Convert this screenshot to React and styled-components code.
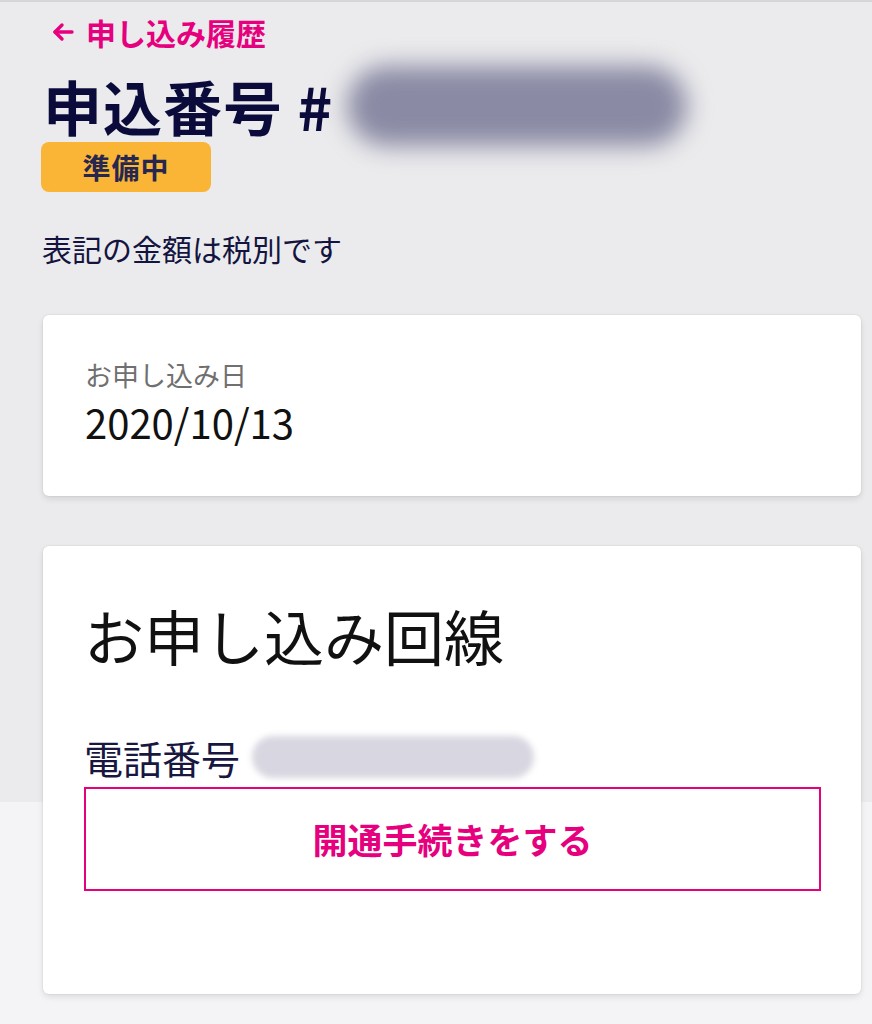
import React from "react";
import styled, { createGlobalStyle } from "styled-components";

const Global = createGlobalStyle`
  html, body { margin: 0; padding: 0; }
  body {
    font-family: "Noto Sans CJK JP", "Noto Sans", sans-serif;
    background: linear-gradient(to bottom, #ebebed 0, #ebebed 802px, #f4f4f6 802px, #f4f4f6 100%);
    min-height: 1024px;
  }
`;

const Page = styled.div`
  border-top: 2px solid #d6d6d8;
  padding: 0 11px 40px 43px;
  display: flex;
  flex-direction: column;
`;

const BackLink = styled.a`
  display: flex;
  align-items: center;
  gap: 12px;
  margin: 14px 0 0 9px;
  color: #e6007e;
  font-weight: 700;
  font-size: 30px;
  line-height: 32px;
  text-decoration: none;
`;

const TitleRow = styled.div`
  display: flex;
  align-items: center;
  margin-top: 26px;
  height: 64px;
`;

const Title = styled.h1`
  margin: 0;
  font-size: 59px;
  line-height: 64px;
  font-weight: 700;
  color: #0b0b3b;
  letter-spacing: 1px;
`;

const Redact = styled.div`
  width: ${(p) => p.$w}px;
  height: ${(p) => p.$h}px;
  margin-left: ${(p) => p.$ml}px;
  border-radius: ${(p) => p.$h / 2}px;
  background: ${(p) => p.$bg};
  filter: blur(${(p) => p.$blur}px);
`;

const Badge = styled.span`
  align-self: flex-start;
  margin-top: 4px;
  margin-left: -2px;
  width: 170px;
  height: 50px;
  border-radius: 8px;
  background: #fbb536;
  color: #262650;
  font-weight: 700;
  font-size: 28px;
  display: flex;
  align-items: center;
  justify-content: center;
  letter-spacing: 1px;
`;

const Notice = styled.p`
  margin: 39px 0 0 -1px;
  font-size: 30px;
  line-height: 34px;
  color: #141440;
`;

const Card = styled.section`
  background: #fff;
  border-radius: 6px;
  box-shadow: 0 3px 6px rgba(0, 0, 0, 0.1), 0 0 0 1px rgba(0, 0, 0, 0.03);
  margin-top: ${(p) => p.$mt}px;
  height: ${(p) => p.$h}px;
  box-sizing: border-box;
  padding: ${(p) => p.$pad};
  display: flex;
  flex-direction: column;
`;

const Label = styled.div`
  font-size: 27px;
  line-height: 30px;
  color: #707070;
`;

const DateText = styled.div`
  margin-top: 10px;
  font-size: 40px;
  line-height: 44px;
  color: #111;
`;

const SectionTitle = styled.h2`
  margin: 0;
  font-size: 60px;
  line-height: 66px;
  font-weight: 400;
  color: #111;
`;

const PhoneRow = styled.div`
  display: flex;
  align-items: center;
  margin-top: 66px;
  height: 46px;
`;

const PhoneLabel = styled.span`
  font-size: 39px;
  line-height: 46px;
  color: #17173f;
`;

const ActionButton = styled.button`
  margin-top: 7px;
  height: 104px;
  border: 2px solid #e6007e;
  background: #fff;
  color: #e6007e;
  font-family: inherit;
  font-weight: 700;
  font-size: 35px;
  cursor: pointer;
  padding: 0 0 2px;
`;

const Arrow = () => (
  <svg width="22" height="20" viewBox="0 0 22 20" fill="none" stroke="#e6007e" strokeWidth="3.4" strokeLinecap="round" strokeLinejoin="round">
    <path d="M20 10H3" />
    <path d="M10 3L3 10L10 17" />
  </svg>
);

export default function App() {
  return (
    <>
      <Global />
      <Page>
        <BackLink href="#">
          <Arrow />
          申し込み履歴
        </BackLink>
        <TitleRow>
          <Title>申込番号 #</Title>
          <Redact $w={340} $h={80} $ml={14} $bg="rgba(105,105,140,0.75)" $blur={12} />
        </TitleRow>
        <Badge>準備中</Badge>
        <Notice>表記の金額は税別です</Notice>
        <Card $mt={50} $h={181} $pad="45px 42px 0 42px">
          <Label>お申し込み日</Label>
          <DateText>2020/10/13</DateText>
        </Card>
        <Card $mt={50} $h={448} $pad="56px 40px 0 41px">
          <SectionTitle>お申し込み回線</SectionTitle>
          <PhoneRow>
            <PhoneLabel>電話番号</PhoneLabel>
            <Redact $w={282} $h={42} $ml={12} $bg="#d8d6e0" $blur={3} />
          </PhoneRow>
          <ActionButton>開通手続きをする</ActionButton>
        </Card>
      </Page>
    </>
  );
}
